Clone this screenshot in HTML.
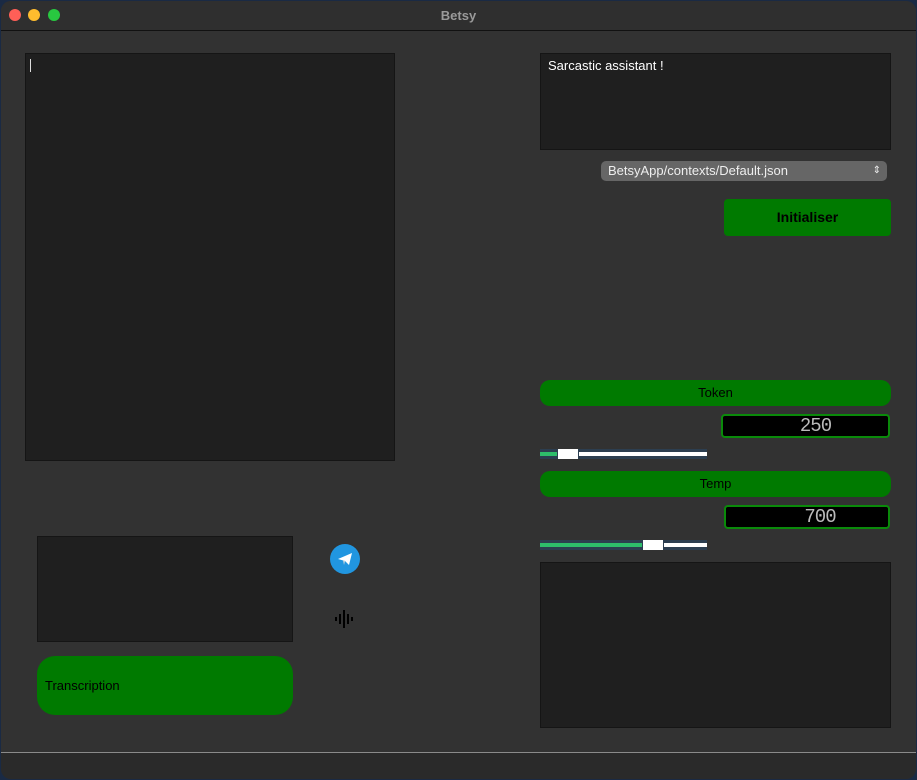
<!DOCTYPE html>
<html><head><style>
body{margin:0;width:917px;height:780px;background:#1a2a44;overflow:hidden;font-family:"Liberation Sans",sans-serif}
.win{position:absolute;left:1px;top:1px;width:915px;height:778px;background:#323232;border-radius:10px;overflow:hidden}
.title{position:absolute;left:0;top:0;width:915px;height:29px;background:#2f2f2f;border-bottom:1px solid #111;text-align:center;line-height:29px;color:#9a9a9a;font-weight:bold;font-size:13px}
.dot{position:absolute;top:8px;width:12px;height:12px;border-radius:6px}
.box{position:absolute;background:#1f1f1f;border:1px solid #151515}
.green{position:absolute;background:#007a00;color:#000;text-align:center;font-size:13px}
.lcd{position:absolute;background:#000;border:2px solid #0a8a0a;border-radius:4px;color:#bbb;font-family:"Liberation Mono",monospace;font-size:19px;text-align:center;letter-spacing:-1px}
.sl{position:absolute;height:10px;background:#2c3e50}
</style></head><body><div class="win">
<div class="title">Betsy<div class="dot" style="left:8px;background:#fe5f57"></div><div class="dot" style="left:27px;background:#febc2e"></div><div class="dot" style="left:47px;background:#28c840"></div></div>
<div class="box" style="left:24px;top:52px;width:368px;height:406px"><div style="position:absolute;left:4px;top:5px;width:1px;height:13px;background:#ddd"></div></div>
<div class="box" style="left:539px;top:52px;width:349px;height:95px;color:#fff;font-size:13px"><div style="padding:4px 7px">Sarcastic assistant !</div></div>
<div style="position:absolute;left:600px;top:160px;width:286px;height:20px;background:#666;border-radius:5px;color:#eee;font-size:13px;line-height:20px;padding-left:7px;box-sizing:border-box">BetsyApp/contexts/Default.json<span style="position:absolute;right:6px;font-size:10px">⇕</span></div>
<div class="green" style="left:723px;top:198px;width:167px;height:37px;line-height:37px;border-radius:4px;font-weight:bold;font-size:14px">Initialiser</div>
<div class="green" style="left:539px;top:379px;width:351px;height:26px;line-height:26px;border-radius:10px">Token</div>
<div class="lcd" style="left:720px;top:413px;width:165px;height:20px;line-height:20px;text-indent:20px">250</div>
<div class="sl" style="left:539px;top:448px;width:167px"><div style="position:absolute;left:0;top:3px;width:17px;height:4px;background:#2ebd6b"></div><div style="position:absolute;left:18px;top:0;width:20px;height:10px;background:#fff"></div><div style="position:absolute;left:39px;top:3px;width:128px;height:4px;background:#fff"></div></div>
<div class="green" style="left:539px;top:470px;width:351px;height:26px;line-height:26px;border-radius:10px">Temp</div>
<div class="lcd" style="left:723px;top:504px;width:162px;height:20px;line-height:20px;text-indent:26px">700</div>
<div class="sl" style="left:539px;top:539px;width:167px"><div style="position:absolute;left:0;top:3px;width:102px;height:4px;background:#2ebd6b"></div><div style="position:absolute;left:103px;top:0;width:20px;height:10px;background:#fff"></div><div style="position:absolute;left:124px;top:3px;width:43px;height:4px;background:#fff"></div></div>
<div class="box" style="left:539px;top:561px;width:349px;height:164px"></div>
<div class="box" style="left:36px;top:535px;width:254px;height:104px"></div>
<div class="green" style="left:36px;top:655px;width:256px;height:59px;line-height:59px;border-radius:18px;text-align:left;padding-left:8px;box-sizing:border-box">Transcription</div>
<svg style="position:absolute;left:329px;top:543px" width="30" height="30" viewBox="0 0 30 30"><circle cx="15" cy="15" r="15" fill="#2196e0"/><path d="M8 15 L22 9 L19 21 L15 17 Z" fill="#fff"/><path d="M15 17 L14 21 L13 16 Z" fill="#cfd8dc"/></svg>
<svg style="position:absolute;left:333px;top:608px" width="24" height="20" viewBox="0 0 24 20"><g stroke="#000" stroke-width="2"><path d="M2 8v4M6 5v10M10 1v18M14 5v10M18 8v4"/></g></svg>
<div style="position:absolute;left:0;top:751px;width:915px;height:1px;background:#8a8a8a"></div>
<div style="position:absolute;left:0;top:752px;width:915px;height:26px;background:#2a2a2a"></div>
</div></body></html>
